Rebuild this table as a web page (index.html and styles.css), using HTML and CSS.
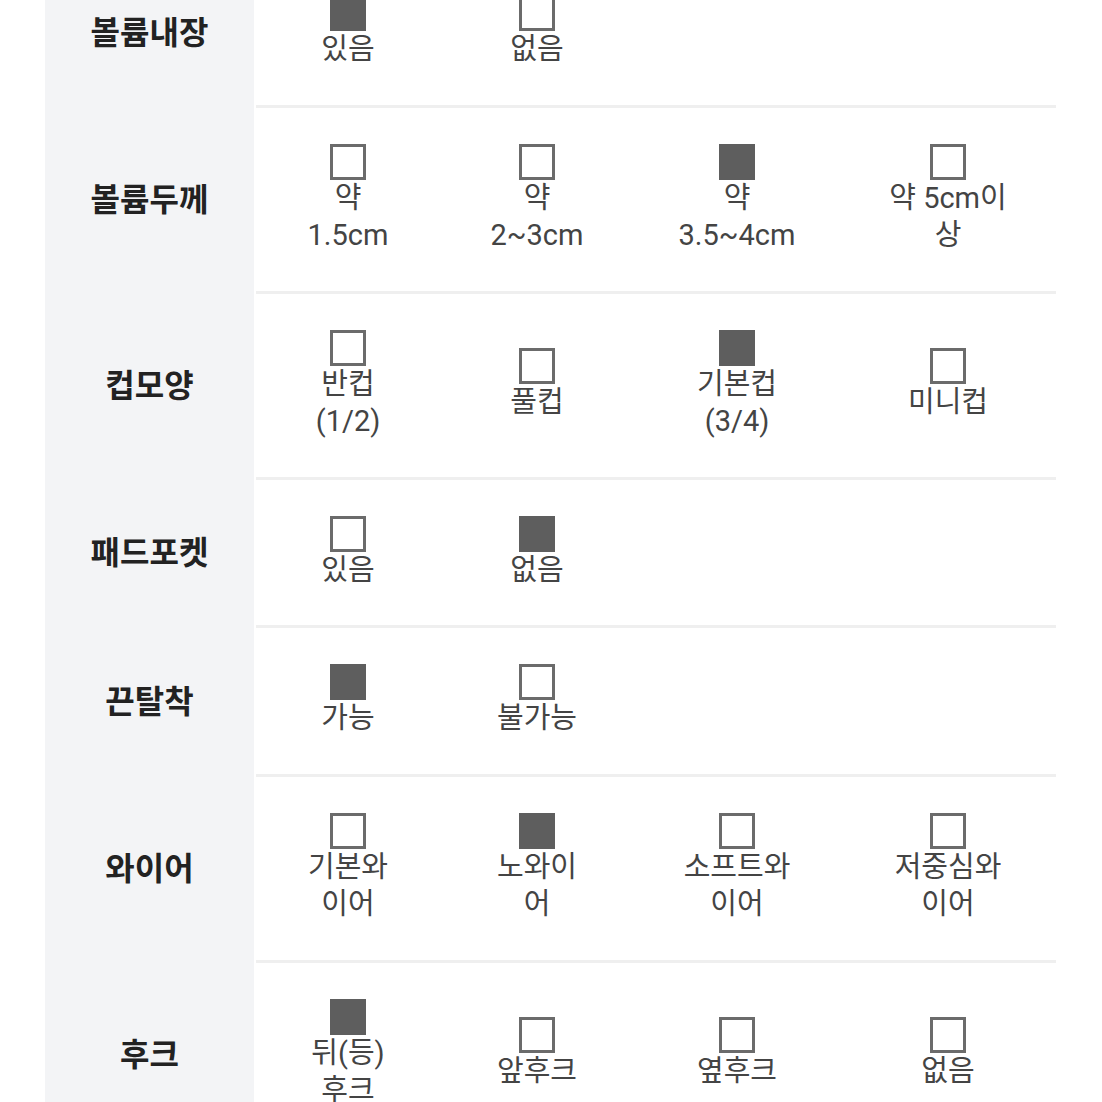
FILE: index.html
```html
<!DOCTYPE html>
<html lang="ko">
<head>
<meta charset="utf-8">
<title>사이즈 정보</title>
<link rel="stylesheet" href="styles.css">
</head>
<body>
<div class="page">
  <div class="spec">
    <div class="row">
      <div class="label">볼륨내장</div>
      <div class="opts">
        <div class="opt on"><span class="box"></span><span class="txt">있음</span></div>
        <div class="opt"><span class="box"></span><span class="txt">없음</span></div>
      </div>
    </div>
    <div class="row">
      <div class="label">볼륨두께</div>
      <div class="opts">
        <div class="opt"><span class="box"></span><span class="txt">약 1.5cm</span></div>
        <div class="opt"><span class="box"></span><span class="txt">약 2~3cm</span></div>
        <div class="opt on"><span class="box"></span><span class="txt">약 3.5~4cm</span></div>
        <div class="opt"><span class="box"></span><span class="txt">약 5cm이상</span></div>
      </div>
    </div>
    <div class="row">
      <div class="label">컵모양</div>
      <div class="opts">
        <div class="opt"><span class="box"></span><span class="txt">반컵(1/2)</span></div>
        <div class="opt"><span class="box"></span><span class="txt">풀컵</span></div>
        <div class="opt on"><span class="box"></span><span class="txt">기본컵(3/4)</span></div>
        <div class="opt"><span class="box"></span><span class="txt">미니컵</span></div>
      </div>
    </div>
    <div class="row">
      <div class="label">패드포켓</div>
      <div class="opts">
        <div class="opt"><span class="box"></span><span class="txt">있음</span></div>
        <div class="opt on"><span class="box"></span><span class="txt">없음</span></div>
      </div>
    </div>
    <div class="row">
      <div class="label">끈탈착</div>
      <div class="opts">
        <div class="opt on"><span class="box"></span><span class="txt">가능</span></div>
        <div class="opt"><span class="box"></span><span class="txt">불가능</span></div>
      </div>
    </div>
    <div class="row">
      <div class="label">와이어</div>
      <div class="opts">
        <div class="opt"><span class="box"></span><span class="txt">기본와이어</span></div>
        <div class="opt on"><span class="box"></span><span class="txt">노와이어</span></div>
        <div class="opt"><span class="box"></span><span class="txt">소프트와이어</span></div>
        <div class="opt"><span class="box"></span><span class="txt">저중심와이어</span></div>
      </div>
    </div>
    <div class="row">
      <div class="label">후크</div>
      <div class="opts">
        <div class="opt on"><span class="box"></span><span class="txt">뒤(등)후크</span></div>
        <div class="opt"><span class="box"></span><span class="txt">앞후크</span></div>
        <div class="opt"><span class="box"></span><span class="txt">옆후크</span></div>
        <div class="opt"><span class="box"></span><span class="txt">없음</span></div>
      </div>
    </div>
  </div>
</div>
</body>
</html>
```
FILE: styles.css
```css
html, body {
  margin: 0;
  padding: 0;
  background: #ffffff;
}

.page {
  height: 1102px;
  overflow: hidden;
  font-family: Roboto, "Noto Sans CJK KR", sans-serif;
}

.spec {
  margin: -41px 0 0 45px;
  width: 1011px;
}

.row {
  display: grid;
  grid-template-columns: 209px 800px;
  column-gap: 2px;
}

.label {
  background: #f3f4f6;
  display: flex;
  align-items: center;
  justify-content: center;
  padding-bottom: 7px;
  font-family: "Noto Sans CJK KR", sans-serif;
  font-weight: 700;
  font-size: 32px;
  color: #222222;
}

.opts {
  display: grid;
  grid-template-columns: 184px 194px 206px 216px;
  align-items: center;
  padding: 36px 0;
  border-bottom: 3px solid #efefef;
}

.opt {
  justify-self: center;
  width: 90px;
  display: flex;
  flex-direction: column;
  align-items: center;
  text-align: center;
}

.opt:nth-child(2) {
  width: 96px;
}

.opt:nth-child(3),
.opt:nth-child(4) {
  width: 124px;
}

.box {
  display: block;
  box-sizing: border-box;
  width: 36px;
  height: 36px;
  border: 3px solid #6b6b6b;
  background: #ffffff;
}

.opt.on .box {
  border-color: #5e5e5e;
  background: #5e5e5e;
}

.txt {
  display: block;
  font-size: 29px;
  line-height: 37.5px;
  color: #444444;
}
```
